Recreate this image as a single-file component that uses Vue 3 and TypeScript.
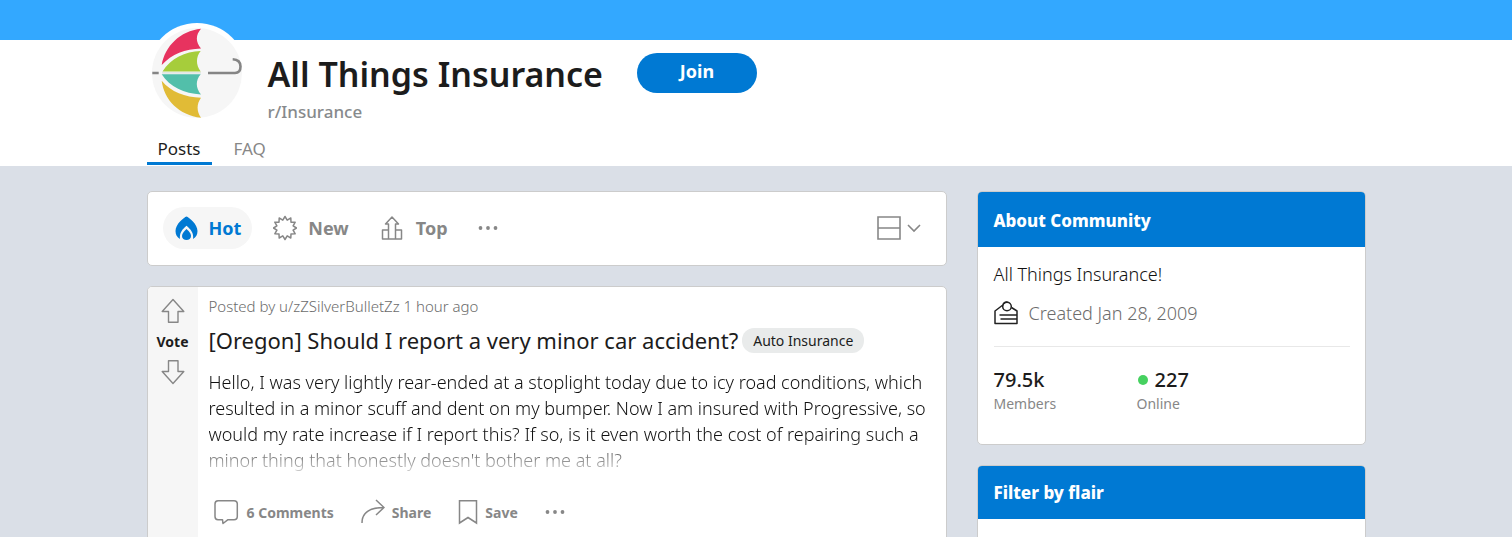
<script setup lang="ts">
interface Stat {
  value: string
  label: string
  online: boolean
}

const tabs: string[] = ['Posts', 'FAQ']
const stats: Stat[] = [
  { value: '79.5k', label: 'Members', online: false },
  { value: '227', label: 'Online', online: true },
]
</script>

<template>
  <div class="page">
    <div class="banner"></div>
    <header class="header">
      <div class="wrap">
        <div class="identity">
          <svg class="avatar" viewBox="0 0 100 100" aria-hidden="true">
            <circle cx="50" cy="50" r="50" fill="#fff" />
            <circle cx="50" cy="50" r="45" fill="#f6f6f6" />
            <path d="M14.7 42C18 23 33 8 54 5.7C48.500 12 48.500 19 54 25.500C38 26 25 31 14.700 42Z" fill="#e7335f" />
            <path d="M15.500 48.500C24 35 38 28.500 53.700 28C48.700 34 48.700 42 53.700 48.500Z" fill="#a6cd3b" />
            <path d="M14.700 51.300H53.700C48.500 57 48.500 65 54 71.500C37 70.500 23 64 14.700 51.300Z" fill="#52bfaa" />
            <path d="M14.700 57.700C24 69 38 74 54 74.700C49.500 81 49.500 88 54 94.800C32 92 17 77 14.700 57.700Z" fill="#e1bb36" />
            <path d="M5.300 50H11.700M61 50H88Q93.500 50 93.500 43.500Q93.500 36.500 85.700 36.200" fill="none" stroke="#858585" stroke-width="2.600" />
            <path d="M15 49.900H54" stroke="#d3dcd8" stroke-width="1" />
          </svg>
          <div class="names">
            <h1>All Things Insurance</h1>
            <p>r/Insurance</p>
          </div>
          <button class="join" type="button">Join</button>
        </div>
        <nav class="tabs">
          <a v-for="(tab, i) in tabs" :key="tab" href="#" :class="{ current: i === 0 }">{{ tab }}</a>
        </nav>
      </div>
    </header>

    <div class="wrap columns">
      <main class="feed">
        <div class="card sorts">
          <button class="sort active" type="button">
            <svg width="24" height="26" viewBox="0 0 24 26" aria-hidden="true">
              <path d="M12.500 1.500C10 2.500 1.500 9 1.500 16C1.500 19.500 3 22.500 6 24C5 18 8.500 14 12.500 10.700C16.500 14 20 18 19 24C22 22.500 23.500 19.500 23.500 16C23.500 9 15 2.500 12.500 1.500Z" fill="currentColor" />
              <path d="M12.500 14C10.500 15.500 8 18.500 8 21C8 23.500 10 25 12.500 25S17 23.500 17 21C17 18.500 14.500 15.500 12.500 14Z" fill="currentColor" />
            </svg>
            Hot
          </button>
          <button class="sort" type="button">
            <svg width="24" height="26" viewBox="0 0 24 26" aria-hidden="true">
              <path d="M12 1.500L14.200 5.100L17.800 3L18 7.200L22.200 7.200L20.100 10.800L23.500 13L20.100 15.200L22.200 18.800L18 18.900L17.800 23L14.200 20.900L12 24.500L9.800 20.900L6.200 23L6 18.900L1.800 18.800L3.900 15.200L.5 13L3.900 10.800L1.800 7.200L6 7.200L6.200 3L9.800 5.100Z" fill="none" stroke="currentColor" stroke-width="1.500" stroke-linejoin="round" />
            </svg>
            New
          </button>
          <button class="sort" type="button">
            <svg width="24" height="26" viewBox="0 0 24 26" aria-hidden="true">
              <path d="M7.500 24V9H4.500L11 2L17.500 9H14.500V24M7.500 15H1.500V24H20.500V15H14.500" fill="none" stroke="currentColor" stroke-width="1.500" stroke-linejoin="round" />
            </svg>
            Top
          </button>
          <button class="more" type="button" aria-label="More sort options">
            <svg width="20" height="6" viewBox="0 0 20 6" aria-hidden="true">
              <circle cx="2.500" cy="3" r="1.900" /><circle cx="10" cy="3" r="1.900" /><circle cx="17.500" cy="3" r="1.900" />
            </svg>
          </button>
          <button class="view" type="button" aria-label="Card view">
            <svg width="24" height="24" viewBox="0 0 24 24" aria-hidden="true">
              <path d="M1 1H23V23H1ZM1 12H23" fill="none" stroke="currentColor" stroke-width="1.600" />
            </svg>
            <svg width="14" height="10" viewBox="0 0 14 10" aria-hidden="true">
              <path d="M1 2L7 8L13 2" fill="none" stroke="currentColor" stroke-width="1.600" />
            </svg>
          </button>
        </div>

        <article class="card post">
          <div class="votes">
            <button type="button" aria-label="Upvote">
              <svg width="24" height="26" viewBox="0 0 24 26" aria-hidden="true">
                <path d="M12 1.500L22.800 13.500H17V24.300H7.500V13.500H1.200Z" fill="none" stroke="currentColor" stroke-width="1.400" stroke-linejoin="round" />
              </svg>
            </button>
            <span>Vote</span>
            <button type="button" aria-label="Downvote">
              <svg width="24" height="26" viewBox="0 0 24 26" aria-hidden="true">
                <path d="M12 24.500L22.800 12.500H17V1.700H7.500V12.500H1.200Z" fill="none" stroke="currentColor" stroke-width="1.400" stroke-linejoin="round" />
              </svg>
            </button>
          </div>
          <div class="content">
            <p class="byline">Posted by u/zZSilverBulletZz 1 hour ago</p>
            <div class="headline">
              <h2>[Oregon] Should I report a very minor car accident?</h2>
              <a class="flair" href="#">Auto Insurance</a>
            </div>
            <p class="excerpt">
              Hello, I was very lightly rear-ended at a stoplight today due to icy road conditions, which
              resulted in a minor scuff and dent on my bumper. Now I am insured with Progressive, so
              would my rate increase if I report this? If so, is it even worth the cost of repairing such a
              minor thing that honestly doesn't bother me at all?
            </p>
            <div class="actions">
              <button type="button">
                <svg width="26" height="26" viewBox="0 0 26 26" aria-hidden="true">
                  <path d="M4 1.700H20Q23.300 1.700 23.300 5V17.500Q23.300 20.700 20 20.700H14L9 24.500L8.500 20.700H4Q1 20.700 1 17.500V5Q1 1.700 4 1.700Z" fill="none" stroke="currentColor" stroke-width="1.500" stroke-linejoin="round" />
                </svg>
                6 Comments
              </button>
              <button type="button">
                <svg width="24" height="26" viewBox="0 0 24 26" aria-hidden="true">
                  <path d="M1 24C1 14 8.500 8.500 23 8.500M15 1L23 8.500L15 16" fill="none" stroke="currentColor" stroke-width="1.500" />
                </svg>
                Share
              </button>
              <button type="button">
                <svg width="20" height="26" viewBox="0 0 20 26" aria-hidden="true">
                  <path d="M1.500 1.700H18.500V24L10 18.500L1.500 24Z" fill="none" stroke="currentColor" stroke-width="1.500" />
                </svg>
                Save
              </button>
              <button type="button" aria-label="More actions">
                <svg width="20" height="6" viewBox="0 0 20 6" aria-hidden="true">
                  <g fill="currentColor"><circle cx="2.500" cy="3" r="1.900" /><circle cx="10" cy="3" r="1.900" /><circle cx="17.500" cy="3" r="1.900" /></g>
                </svg>
              </button>
            </div>
          </div>
        </article>
      </main>

      <aside class="side">
        <section class="card about">
          <h3>About Community</h3>
          <div class="about-body">
            <p class="summary">All Things Insurance!</p>
            <p class="created">
              <svg width="24" height="24" viewBox="0 0 24 24" aria-hidden="true">
                <g fill="none" stroke="#222" stroke-width="1.500" stroke-linejoin="round">
                  <path d="M9.500 3.500L1 10V22.500H23V10L17.500 6.500M5.500 14H23M6.500 18H23" />
                  <circle cx="13" cy="5.500" r="4.300" />
                  <path d="M9 3Q11 .5 13.500 1" />
                </g>
              </svg>
              Created Jan 28, 2009
            </p>
            <dl class="stats">
              <div v-for="stat in stats" :key="stat.label">
                <dt>{{ stat.label }}</dt>
                <dd><i v-if="stat.online"></i>{{ stat.value }}</dd>
              </div>
            </dl>
          </div>
        </section>
        <section class="card filter">
          <h3>Filter by flair</h3>
        </section>
      </aside>
    </div>
  </div>
</template>

<style>
body {
  margin: 0;
  background: #dadfe7;
}
</style>

<style scoped>
.page {
  height: 100vh;
  overflow: hidden;
  font-family: "Noto Sans", "Open Sans", sans-serif;
  color: #1c1c1c;
  background: #dadfe7;
}
h1, h2, h3, p, dl, dd {
  margin: 0;
}
button {
  padding: 0;
  border: 0;
  background: none;
  font: inherit;
  color: inherit;
  cursor: pointer;
}
a {
  color: inherit;
  text-decoration: none;
}
svg {
  display: block;
  flex: none;
}
.wrap {
  max-width: 1219px;
  margin: 0 auto;
}
.banner {
  height: 40px;
  background: #33a8ff;
}
.header {
  background: #fff;
}
.identity {
  display: flex;
  align-items: flex-start;
  height: 92px;
}
.avatar {
  width: 100px;
  height: 100px;
  margin-top: -17px;
}
.names {
  margin: 10px 34px 0 21px;
}
.names h1 {
  font-size: 34px;
  line-height: 48px;
  font-weight: 600;
  white-space: nowrap;
}
.names p {
  font-size: 17px;
  line-height: 28px;
  font-weight: 500;
  color: #878a8c;
}
.join {
  width: 120px;
  height: 40px;
  margin-top: 13px;
  padding-bottom: 4px;
  border-radius: 20px;
  background: #0079d3;
  color: #fff;
  font-size: 18px;
  font-weight: 700;
}
.tabs {
  display: flex;
  gap: 11px;
  height: 34px;
}
.tabs a {
  box-sizing: border-box;
  height: 33px;
  padding: 0 11px;
  border-bottom: 3px solid transparent;
  font-size: 17px;
  line-height: 34px;
  color: #878787;
}
.tabs .current {
  color: #1c1c1c;
  border-color: #0079d3;
}
.columns {
  display: grid;
  grid-template-columns: minmax(0, 800fr) minmax(0, 389fr);
  gap: 30px;
  padding-top: 25px;
}
.card {
  border: 1px solid #ccc;
  border-radius: 5px;
  background: #fff;
  overflow: hidden;
}
.feed, .side {
  display: flex;
  flex-direction: column;
  gap: 20px;
}
.sorts {
  display: flex;
  align-items: center;
  gap: 10px;
  height: 71px;
  padding: 0 25px 2px 15px;
  color: #878787;
}
.sort {
  display: flex;
  align-items: center;
  gap: 11px;
  height: 42px;
  padding: 0 11px;
  border-radius: 21px;
  font-size: 18px;
  font-weight: 700;
}
.sort.active {
  background: #f6f6f6;
  color: #0079d3;
}
.more {
  margin-left: 9px;
  fill: currentColor;
}
.view {
  display: flex;
  align-items: center;
  gap: 6px;
  margin-left: auto;
}
.post {
  display: flex;
}
.votes {
  display: flex;
  flex-direction: column;
  align-items: center;
  width: 50px;
  padding-top: 11px;
  background: #f6f6f6;
  color: #878787;
}
.votes span {
  font-size: 14px;
  line-height: 35px;
  font-weight: 700;
  color: #1c1c1c;
}
.content {
  flex: 1;
  min-width: 0;
  padding: 8px 8px 20px 11px;
}
.byline {
  font-size: 15px;
  line-height: 22px;
  font-weight: 300;
  color: #6c6c6c;
}
.headline {
  display: flex;
  align-items: center;
  gap: 4px;
  height: 46px;
}
.headline h2 {
  font-size: 22px;
  font-weight: 400;
  white-space: nowrap;
}
.flair {
  padding: 0 11px;
  border-radius: 12px;
  background: #e9ebeb;
  font-size: 14px;
  line-height: 25px;
  white-space: nowrap;
}
.excerpt {
  height: 106px;
  margin-top: 6px;
  font-size: 18px;
  line-height: 26px;
  font-weight: 300;
  color: #111;
  mask-image: linear-gradient(#000 65%, transparent 105%);
}
.actions {
  display: flex;
  align-items: center;
  gap: 27px;
  margin-top: 24px;
  padding-left: 5px;
  color: #878787;
  font-size: 14px;
  font-weight: 700;
}
.actions button {
  display: flex;
  align-items: center;
  gap: 7px;
}
.side h3 {
  padding: 0 16px;
  background: #0079d3;
  color: #fff;
  font-size: 17px;
  font-weight: 800;
  line-height: 53px;
}
.about h3 {
  padding-top: 2px;
}
.about-body {
  padding: 12px 15px 30px 16px;
}
.summary {
  font-size: 18px;
  line-height: 30px;
  font-weight: 300;
  color: #111;
}
.created {
  display: flex;
  align-items: center;
  gap: 11px;
  height: 48px;
  padding-bottom: 9px;
  border-bottom: 1px solid #e8e8e8;
  font-size: 18px;
  font-weight: 300;
  color: #6c6c6c;
}
.stats {
  display: grid;
  grid-template-columns: 143px 1fr;
  padding-top: 19px;
}
.stats > div {
  display: flex;
  flex-direction: column-reverse;
}
.stats dd {
  display: flex;
  align-items: center;
  gap: 7px;
  font-size: 20px;
  line-height: 28px;
  font-weight: 500;
}
.stats i {
  width: 10px;
  height: 10px;
  margin-left: 1px;
  border-radius: 50%;
  background: #46d160;
}
.stats dt {
  font-size: 14px;
  line-height: 20px;
  color: #878787;
}
.filter {
  min-height: 180px;
}
</style>
